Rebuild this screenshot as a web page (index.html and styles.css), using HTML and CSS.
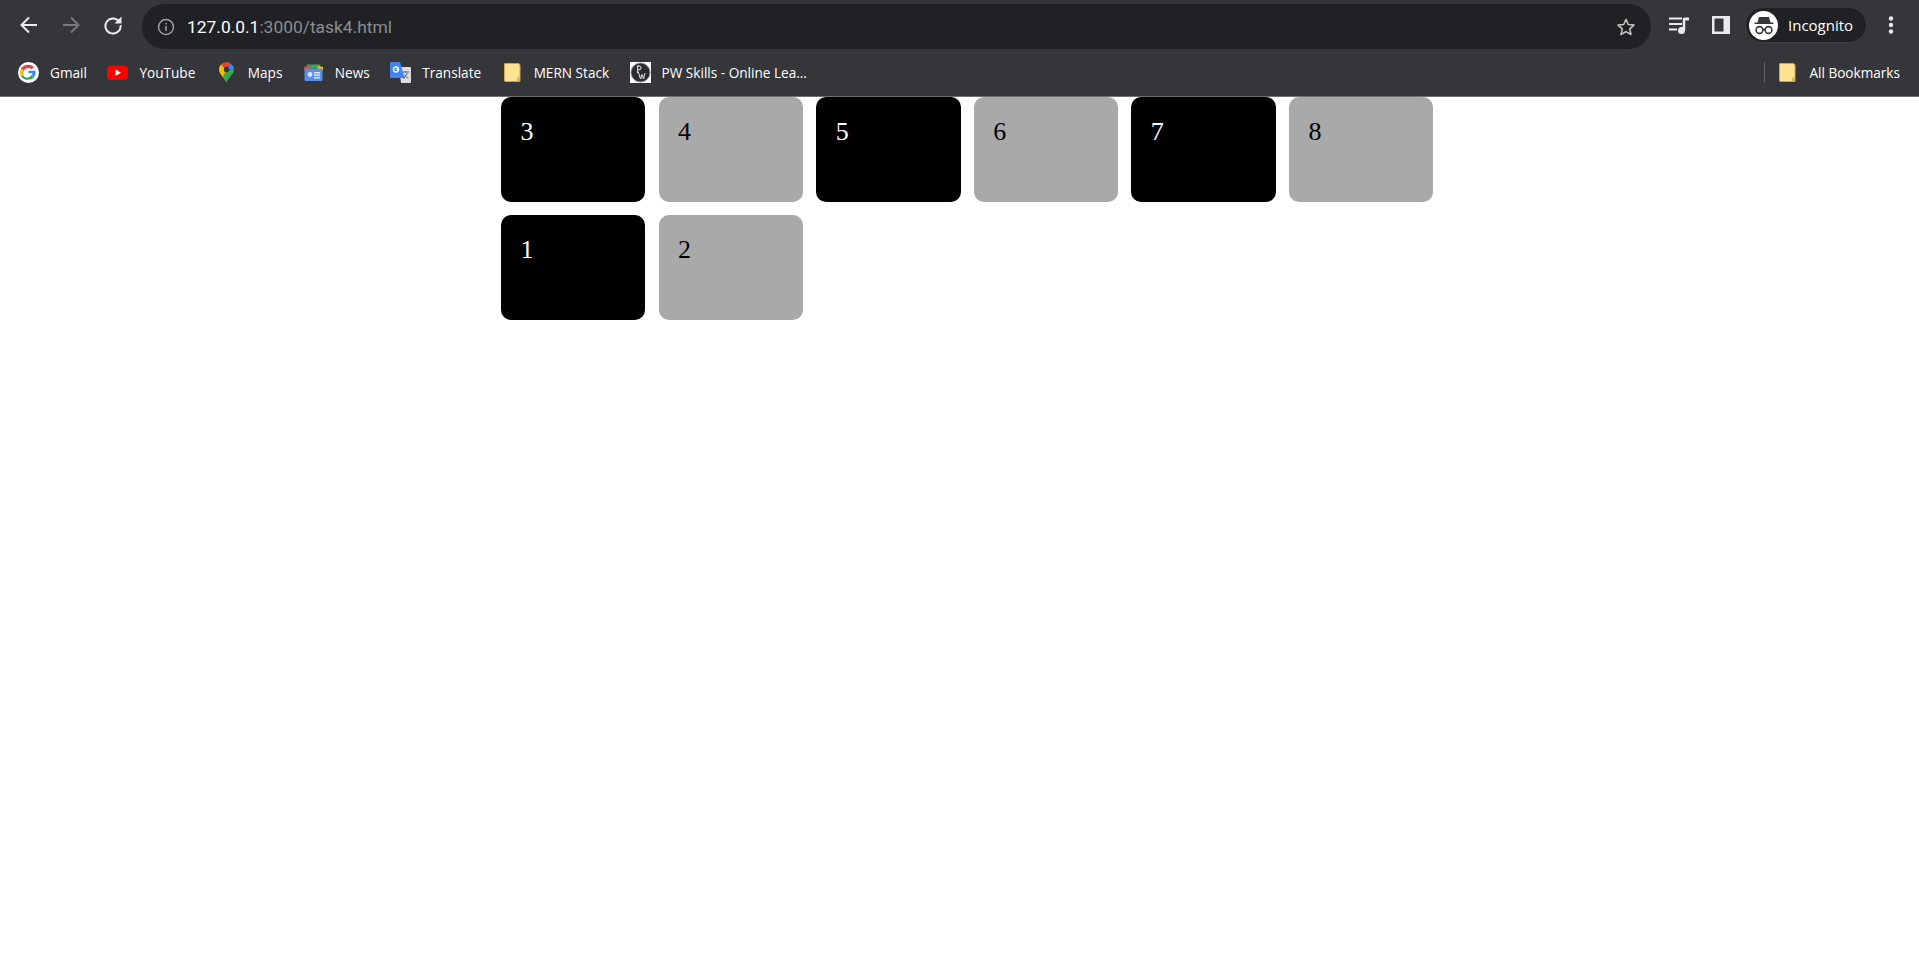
FILE: index.html
```html
<!DOCTYPE html>
<html>
<head>
    <meta charset="UTF-8">
    <title>task4</title>
    <link rel="stylesheet" href="styles.css">
</head>
<body>
    <header class="browser">
        <div class="toolbar">
            <span class="nav-btn">
                <svg width="20" height="20" viewBox="0 0 20 20"><path d="M18 10H3M10 2.500L2.500 10l7.500 7.500" fill="none" stroke="#e8eaed" stroke-width="2"/></svg>
            </span>
            <span class="nav-btn">
                <svg width="20" height="20" viewBox="0 0 20 20"><path d="M2 10h15M10 2.500l7.500 7.500-7.500 7.500" fill="none" stroke="#77787b" stroke-width="2"/></svg>
            </span>
            <span class="nav-btn">
                <svg width="20" height="20" viewBox="0 0 20 20"><path d="M16.200 6.500A7.600 7.600 0 1 0 17.600 10" fill="none" stroke="#e8eaed" stroke-width="2"/><path d="M18.500 1.500v7h-7z" fill="#e8eaed"/></svg>
            </span>

            <div class="address">
                <svg class="info" width="18" height="18" viewBox="0 0 18 18"><circle cx="9" cy="9" r="7.500" fill="none" stroke="#9aa0a6" stroke-width="1.500"/><path d="M8.200 8h1.600v5H8.200zM8.200 5h1.600v1.600H8.200z" fill="#9aa0a6"/></svg>
                <span class="url"><span class="host">127.0.0.1</span>:3000/task4.html</span>
                <svg class="star" width="20" height="20" viewBox="0 0 20 20"><path d="M10 2.300l2.300 5.200 5.700.6-4.300 3.800 1.300 5.600L10 14.600l-5 2.900 1.300-5.600L2 8.100l5.700-.6z" fill="none" stroke="#c4c7c5" stroke-width="1.500" stroke-linejoin="round"/></svg>
            </div>

            <span class="nav-btn">
                <svg width="22" height="20" viewBox="0 0 22 20"><path d="M1 3.500h13M1 9h13M1 14.500h8" stroke="#e8eaed" stroke-width="2"/><path d="M16 3v12" stroke="#e8eaed" stroke-width="2.500"/><path d="M16 2.500h5v3h-5z" fill="#e8eaed"/><circle cx="13.500" cy="15.500" r="3.500" fill="#e8eaed"/></svg>
            </span>
            <span class="nav-btn">
                <svg width="20" height="20" viewBox="0 0 20 20"><path d="M1 1h18v18H1z" fill="#e8eaed"/><path d="M3.500 3.500h9v13h-9z" fill="#35363a"/></svg>
            </span>
            <div class="profile">
                <span class="avatar">
                    <svg width="24" height="24" viewBox="0 0 24 24"><path d="M7 4h10l1.500 5.500h3v1.500H2.500V9.500h3z" fill="#35363a"/><circle cx="7.500" cy="17" r="3.400" fill="none" stroke="#35363a" stroke-width="1.600"/><circle cx="16.500" cy="17" r="3.400" fill="none" stroke="#35363a" stroke-width="1.600"/><path d="M10.500 16.500h3" stroke="#35363a" stroke-width="1.500"/></svg>
                </span>
                <span class="profile-name">Incognito</span>
            </div>
            <span class="nav-btn">
                <svg width="6" height="20" viewBox="0 0 6 20"><circle cx="3" cy="3.500" r="2.200" fill="#e8eaed"/><circle cx="3" cy="10" r="2.200" fill="#e8eaed"/><circle cx="3" cy="16.500" r="2.200" fill="#e8eaed"/></svg>
            </span>
        </div>

        <div class="bookmarks">
            <a class="bookmark">
                <svg class="favicon" viewBox="0 0 21 21"><circle cx="10.500" cy="10.500" r="10.500" fill="#fff"/><path d="M10.500 8.700h7c.4 2.200 0 4.300-1 5.800l-3-1.500c.5-.5.800-1.100 1-1.800h-4z" fill="#4285f4"/><path d="M4.800 12.600c1.300 3.300 5.400 4.700 8.700.4l3 1.500c-2.700 4.100-9.800 4.600-13.500-.1z" fill="#34a853"/><path d="M3 14.400C1.700 12 1.700 9 3 6.600l2.900 2.200c-.5 1.200-.5 2.500-.1 3.800z" fill="#fbbc05"/><path d="M3 6.600C5.600 2 12.500 1.500 16 5l-2.400 2.300C11.500 5.200 7.200 5.500 5.900 8.800z" fill="#ea4335"/></svg>
                <span>Gmail</span>
            </a>
            <a class="bookmark">
                <svg class="favicon" viewBox="0 0 21 21"><rect x="0" y="3.500" width="21" height="14.500" rx="4" fill="#f00"/><path d="M8.500 7.500l5.500 3.200-5.500 3.200z" fill="#fff"/></svg>
                <span>YouTube</span>
            </a>
            <a class="bookmark">
                <svg class="favicon" viewBox="0 0 21 21"><path d="M10.500 20.500C9 16 3 12.500 3 7.500c0-2 .8-3.700 2-5l5.500 5z" fill="#fbbc04"/><path d="M5 2.500C6.400 1 8.300.300 10.500.300c1.500 0 3 .4 4 1.200L10.500 7.500z" fill="#ea4335"/><path d="M14.500 1.500C16.600 2.800 18 5 18 7.500L10.500 7.500z" fill="#4285f4"/><path d="M18 7.500c0 5-6 8.500-7.500 13L7 14l4-6.500z" fill="#34a853"/><circle cx="10.500" cy="7.500" r="2.700" fill="#35363a"/></svg>
                <span>Maps</span>
            </a>
            <a class="bookmark">
                <svg class="favicon" viewBox="0 0 21 21"><path d="M4 2.500h13l1 4H3z" fill="#34a853"/><path d="M1 5l5-1 1 4H1z" fill="#ea4335"/><path d="M15 4l5 1v3h-6z" fill="#fbbc04"/><rect x="1.500" y="6.500" width="18" height="12.500" rx="1.500" fill="#5a8ee8"/><circle cx="7" cy="12.500" r="2.400" fill="#dbe7fb"/><path d="M11 10h6v1.500h-6zM11 12.500h6V14h-6zM11 15h6v1.500h-6z" fill="#dbe7fb"/></svg>
                <span>News</span>
            </a>
            <a class="bookmark">
                <svg class="favicon" viewBox="0 0 21 21"><path d="M9 5h11a1 1 0 0 1 1 1v14a1 1 0 0 1-1 1H11z" fill="#dadce0"/><path d="M12 10h7M15.500 9v1.500M13.500 17l4-6M14 12.500l4 4" stroke="#5f6368" stroke-width="1"/><path d="M1 0h9l4.500 16H1a1 1 0 0 1-1-1V1a1 1 0 0 1 1-1z" fill="#4285f4"/><circle cx="6" cy="7.500" r="2.500" fill="none" stroke="#fff" stroke-width="1.300"/><path d="M6 7.500h3" stroke="#fff" stroke-width="1.200"/></svg>
                <span>Translate</span>
            </a>
            <a class="bookmark">
                <svg class="favicon" viewBox="0 0 21 21"><path d="M3 1.500h13a2 2 0 0 1 2 2v16H3.500a1 1 0 0 1-1-1V2a.5.5 0 0 1 .5-.5z" fill="#fde293" stroke="#c9a94a" stroke-width="1"/><path d="M15.500 15.500h2.500v4h-3v-3.500z" fill="#d9b650"/></svg>
                <span>MERN Stack</span>
            </a>
            <a class="bookmark">
                <svg class="favicon" viewBox="0 0 21 21"><rect width="21" height="21" fill="#fff"/><circle cx="10.500" cy="10.500" r="9.500" fill="#2b2c2f" stroke="#8a8b8d" stroke-width="1"/><path d="M7 4h1.500M7.700 4v6.500M7 10.500h1.500M7.700 4h1.500a1.800 1.800 0 0 1 0 3.800H7.700M8.500 10.500l2 6.500 1.500-4.500 1.500 4.500 1.500-6" fill="none" stroke="#e8eaed" stroke-width="1"/></svg>
                <span>PW Skills - Online Lea...</span>
            </a>
            <span class="spacer"></span>
            <span class="divider"></span>
            <a class="bookmark">
                <svg class="favicon" viewBox="0 0 21 21"><path d="M3 1.500h13a2 2 0 0 1 2 2v16H3.500a1 1 0 0 1-1-1V2a.5.5 0 0 1 .5-.5z" fill="#fde293" stroke="#c9a94a" stroke-width="1"/><path d="M15.500 15.500h2.500v4h-3v-3.500z" fill="#d9b650"/></svg>
                <span>All Bookmarks</span>
            </a>
        </div>
    </header>

    <main class="boxes">
        <div class="box dark">3</div>
        <div class="box light">4</div>
        <div class="box dark">5</div>
        <div class="box light">6</div>
        <div class="box dark">7</div>
        <div class="box light">8</div>
        <div class="box dark">1</div>
        <div class="box light">2</div>
    </main>
</body>
</html>
```

FILE: styles.css
```css
body {
    margin: 0;
    background-color: #fff;
    font-family: "Liberation Serif", serif;
}

.browser {
    height: 96px;
    background-color: #35363a;
    border-bottom: 1px solid #6f7073;
    font-family: "Open Sans", sans-serif;
    color: #e8eaed;
}

.toolbar {
    display: flex;
    align-items: center;
    height: 50px;
    padding: 0 7px 0 8px;
}

.nav-btn {
    display: flex;
    flex: none;
    align-items: center;
    justify-content: center;
    width: 42px;
    height: 36px;
}

.address {
    display: flex;
    flex: 1;
    align-items: center;
    height: 45px;
    margin: 3px 7px 0 8px;
    padding: 0 15px 0 15px;
    background-color: #202124;
    border-radius: 23px;
}

.url {
    flex: 1;
    margin-left: 12px;
    font-family: "Roboto", sans-serif;
    font-size: 17.4px;
    color: #8b8e92;
}

.host {
    color: #fff;
}

.profile {
    display: flex;
    flex: none;
    align-items: center;
    width: 122px;
    height: 36px;
    margin: 0 3px;
    box-sizing: border-box;
    padding-left: 3px;
    background-color: #202124;
    border: 1px solid #3c3d41;
    border-radius: 18px;
}

.avatar {
    display: flex;
    align-items: center;
    justify-content: center;
    width: 29px;
    height: 29px;
    background-color: #fff;
    border-radius: 50%;
}

.profile-name {
    margin-left: 10px;
    font-size: 15px;
    color: #fff;
}

.bookmarks {
    display: flex;
    align-items: center;
    gap: 20.5px;
    height: 44px;
    padding: 0 19px 0 18px;
}

.bookmark {
    display: flex;
    align-items: center;
    gap: 11px;
    font-size: 13.6px;
    color: #fff;
    white-space: nowrap;
}

.favicon {
    flex: none;
    width: 21px;
    height: 21px;
}

.spacer {
    flex: 1;
}

.divider {
    width: 1px;
    height: 21px;
    margin-right: -8px;
    background-color: #5f6368;
}

.boxes {
    display: grid;
    grid-template-columns: repeat(6, 144.4px);
    grid-auto-rows: 105px;
    gap: 13px 13.2px;
    margin-left: 501px;
}

.box {
    box-sizing: border-box;
    padding: 20px 19.5px;
    font-size: 26px;
    border-radius: 10px;
}

.dark {
    background-color: #000;
    color: #fff;
}

.light {
    background-color: #a9a9a9;
    color: #000;
}
```
